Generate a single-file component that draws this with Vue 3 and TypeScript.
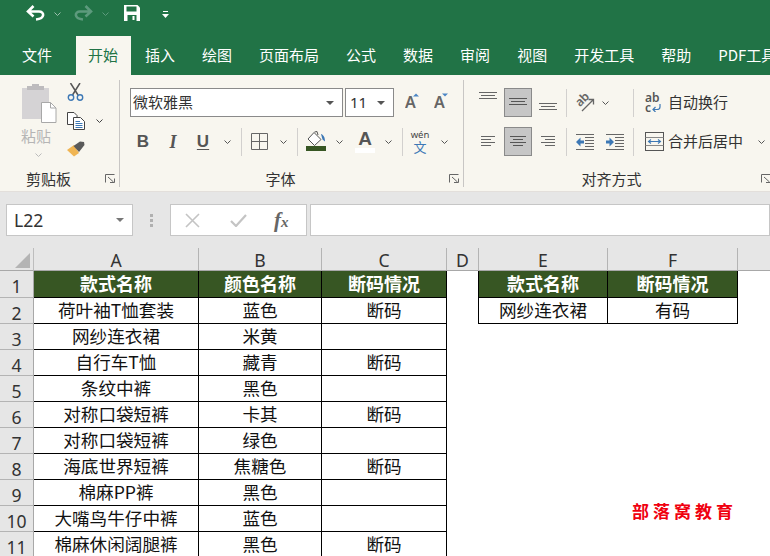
<script setup lang="ts">
const tabs = ['插入', '绘图', '页面布局', '公式', '数据', '审阅', '视图', '开发工具', '帮助', 'PDF工具']
const colHeads = [
  { key: 'A', cls: 'ca' },
  { key: 'B', cls: 'cb' },
  { key: 'C', cls: 'cc' },
  { key: 'D', cls: 'cd' },
  { key: 'E', cls: 'ce' },
  { key: 'F', cls: 'cf' },
]
const rows: [string, string, string][] = [
  ['荷叶袖T恤套装', '蓝色', '断码'],
  ['网纱连衣裙', '米黄', ''],
  ['自行车T恤', '藏青', '断码'],
  ['条纹中裤', '黑色', ''],
  ['对称口袋短裤', '卡其', '断码'],
  ['对称口袋短裤', '绿色', ''],
  ['海底世界短裤', '焦糖色', '断码'],
  ['棉麻PP裤', '黑色', ''],
  ['大嘴鸟牛仔中裤', '蓝色', ''],
  ['棉麻休闲阔腿裤', '黑色', '断码'],
]
const side: Record<number, [string, string]> = { 0: ['网纱连衣裙', '有码'] }
</script>

<template>
  <div class="app">
    <div class="qat">
      <svg class="q-undo" width="20" height="16" viewBox="0 0 20 16"><path d="M7.5 1 L2 6.5 L7.5 11.5 M2 6.5 H13 C18.5 6.5 19.5 13.5 10 14.5" fill="none" stroke="#fff" stroke-width="2.6"/></svg>
      <svg class="q-chev1" width="7" height="4" viewBox="0 0 7 4"><path d="M.5.5 3.5 3.5 6.5.5" fill="none" stroke="#9cc0ad" stroke-width="1"/></svg>
      <svg class="q-redo" width="20" height="16" viewBox="0 0 20 16"><path d="M12.5 1 L18 6.5 L12.5 11.5 M18 6.5 H7 C1.5 6.5 .5 13.5 10 14.5" fill="none" stroke="#5d9a7d" stroke-width="2.6"/></svg>
      <svg class="q-chev2" width="7" height="4" viewBox="0 0 7 4"><path d="M.5.5 3.5 3.5 6.5.5" fill="none" stroke="#5d9a7d" stroke-width="1"/></svg>
      <svg class="q-save" width="16" height="16" viewBox="0 0 16 16"><path d="M0 0H13.5L16 2.5V16H0Z" fill="#fff"/><rect x="2.5" y="1.5" width="10" height="5" fill="#217346"/><rect x="3.5" y="10" width="9" height="6" fill="#217346"/><rect x="8.5" y="11" width="2" height="4" fill="#fff"/></svg>
      <svg class="q-cust" width="7" height="7" viewBox="0 0 7 7"><rect x="1" y="0" width="5" height="1" fill="#fff"/><path d="M0 3H7L3.500 7Z" fill="#fff"/></svg>
    </div>

    <div class="tabs">
      <span class="tab first">文件</span>
      <span class="tab active">开始</span>
      <span v-for="t in tabs" :key="t" class="tab">{{ t }}</span>
    </div>

    <div class="ribbon">
      <section class="group g-clip">
        <div class="clip-body">
          <div class="paste">
            <svg width="36" height="40" viewBox="0 0 36 40">
              <rect x="1" y="5" width="27" height="31" fill="#d5d3d5"/>
              <path d="M6 7V3H11V1H18V3H23V7Z" fill="#bdbbbd"/>
              <path d="M20.500 19.500H29.500L35 25V39.500H20.500Z" fill="#fff" stroke="#a8a8a8"/>
              <path d="M29.500 19.500V25H35" fill="none" stroke="#a8a8a8"/>
            </svg>
            <span class="paste-t">粘贴</span>
            <svg class="p-chev" width="7" height="4" viewBox="0 0 7 4"><path d="M.5.5 3.500 3.500 6.500.5" fill="none" stroke="#bbb"/></svg>
          </div>
          <div class="clip-tools">
            <svg width="17" height="18" viewBox="0 0 17 18">
              <path d="M3.500 0 11 12M13 0 5.500 12" stroke="#555" stroke-width="1.500" fill="none"/>
              <circle cx="4" cy="14.500" r="2.700" fill="none" stroke="#3d78b5" stroke-width="1.400"/>
              <circle cx="13" cy="14.500" r="2.700" fill="none" stroke="#3d78b5" stroke-width="1.400"/>
            </svg>
            <div class="copy-row">
              <svg width="18" height="18" viewBox="0 0 18 18">
                <path d="M.5.5H7L10 3.500V12.500H.5Z" fill="#fff" stroke="#444"/>
                <path d="M6.500 5.500H13.500L17.500 9.500V17.500H6.500Z" fill="#fff" stroke="#444"/>
                <path d="M8.500 9.500H13M8.500 11.500H15.500M8.500 13.500H15.500M8.500 15.500H15.500" stroke="#3d78b5"/>
              </svg>
              <svg class="chev" width="7" height="4" viewBox="0 0 7 4"><path d="M.5.5 3.500 3.500 6.500.5" fill="none" stroke="#444"/></svg>
            </div>
            <svg width="18" height="16" viewBox="0 0 18 16">
              <path d="M0 9 7 4 12 12 7 15.500Z" fill="#f0b553"/>
              <path d="M6.500 5 13 0.500 17 1 17.500 4 12 11Z" fill="#5a5a5a"/>
            </svg>
          </div>
        </div>
        <div class="g-label">
          <span>剪贴板</span>
          <svg class="launch" width="10" height="9" viewBox="0 0 10 9"><path d="M.5 8.500V.5H9.500M3 3 8.500 8M5 8.500H9.500V4.500" fill="none" stroke="#666"/></svg>
        </div>
      </section>

      <section class="group g-font">
        <div class="f-row1">
          <div class="combo name-c"><span>微软雅黑</span><i class="drop"></i></div>
          <div class="combo size-c"><span>11</span><i class="drop"></i></div>
          <svg class="grow" width="20" height="18" viewBox="0 0 20 18"><text x="0" y="15" class="big-a">A</text><path d="M8 3.500 11 .5 14 3.500Z" fill="#4a86c5"/></svg>
          <svg class="shrink" width="20" height="18" viewBox="0 0 20 18"><text x="0" y="15" class="big-a">A</text><path d="M8 .5H14L11 3.500Z" fill="#4a86c5"/></svg>
        </div>
        <div class="f-row2">
          <b class="fb">B</b>
          <em class="fi">I</em>
          <span class="fu">U</span>
          <svg class="chev" width="7" height="4" viewBox="0 0 7 4"><path d="M.5.5 3.500 3.500 6.500.5" fill="none" stroke="#555"/></svg>
          <i class="sep"></i>
          <svg width="17" height="17" viewBox="0 0 17 17"><path d="M.5.5H16.500V16.500H.5ZM8.500.5V16.500M.5 8.500H16.500" fill="none" stroke="#666"/></svg>
          <svg class="chev" width="7" height="4" viewBox="0 0 7 4"><path d="M.5.5 3.500 3.500 6.500.5" fill="none" stroke="#555"/></svg>
          <i class="sep"></i>
          <svg width="20" height="21" viewBox="0 0 20 21">
            <path d="M8 1.500 15 8.500 8.500 14.500 2 8Z" fill="#fff" stroke="#555"/>
            <path d="M15 3C17 3.500 19 6 19 10.500L16.500 8.500Z" fill="#3d78b5"/>
            <path d="M8.500 1 11 .5 12 4" fill="none" stroke="#555"/>
            <rect x="0" y="15" width="20" height="5" fill="#375623"/>
          </svg>
          <svg class="chev" width="7" height="4" viewBox="0 0 7 4"><path d="M.5.5 3.500 3.500 6.500.5" fill="none" stroke="#555"/></svg>
          <div class="font-a"><span>A</span><i></i></div>
          <svg class="chev" width="7" height="4" viewBox="0 0 7 4"><path d="M.5.5 3.500 3.500 6.500.5" fill="none" stroke="#555"/></svg>
          <i class="sep"></i>
          <div class="wen"><span>wén</span><em>文</em></div>
          <svg class="chev" width="7" height="4" viewBox="0 0 7 4"><path d="M.5.5 3.500 3.500 6.500.5" fill="none" stroke="#555"/></svg>
        </div>
        <div class="g-label">
          <span>字体</span>
          <svg class="launch" width="10" height="9" viewBox="0 0 10 9"><path d="M.5 8.500V.5H9.500M3 3 8.500 8M5 8.500H9.500V4.500" fill="none" stroke="#666"/></svg>
        </div>
      </section>

      <section class="group g-align">
        <div class="a-row a-row1">
          <svg class="va-top" width="18" height="9" viewBox="0 0 18 9"><path d="M0 .5H18M2 3.500H16M0 6.500H18" stroke="#666"/></svg>
          <div class="on"><svg width="18" height="9" viewBox="0 0 18 9"><path d="M0 .5H18M2 3.500H16M0 6.500H18" stroke="#555"/></svg></div>
          <svg class="va-bot" width="18" height="9" viewBox="0 0 18 9"><path d="M0 1.500H18M2 4.500H16M0 7.500H18" stroke="#666"/></svg>
          <i class="sep"></i>
          <svg width="20" height="20" viewBox="0 0 20 20">
            <text x="1" y="11" transform="rotate(-45 7 8)" class="orient">ab</text>
            <path d="M7 18 18 7M13.500 6.500H18.500V11.500" fill="none" stroke="#666" stroke-width="1.300"/>
          </svg>
          <svg class="chev" width="7" height="4" viewBox="0 0 7 4"><path d="M.5.5 3.500 3.500 6.500.5" fill="none" stroke="#555"/></svg>
          <i class="sep sep-end"></i>
          <div class="wrap-ic"><span>ab</span><span>c<svg width="9" height="8" viewBox="0 0 9 8"><path d="M8 0V3C8 5 6.500 5.500 5 5.500H1M3.500 3 1 5.500 3.500 8" fill="none" stroke="#3d78b5" stroke-width="1.200"/></svg></span></div>
          <span class="a-text">自动换行</span>
        </div>
        <div class="a-row a-row2">
          <svg width="14" height="11" viewBox="0 0 14 11"><path d="M0 .5H14M0 3.500H10M0 6.500H14M0 9.500H10" stroke="#666"/></svg>
          <div class="on"><svg width="16" height="11" viewBox="0 0 16 11"><path d="M0 .5H16M3 3.500H13M0 6.500H16M3 9.500H13" stroke="#555"/></svg></div>
          <svg width="14" height="11" viewBox="0 0 14 11"><path d="M0 .5H14M4 3.500H14M0 6.500H14M4 9.500H14" stroke="#666"/></svg>
          <i class="sep"></i>
          <svg width="18" height="16" viewBox="0 0 18 16">
            <path d="M0 .5H18M9 3.500H18M9 6.500H18M9 9.500H18M9 12.500H18M0 15.500H18" stroke="#666"/>
            <path d="M0 8 4.500 3.500V6.500H8V9.500H4.500V12.500Z" fill="#3d78b5"/>
          </svg>
          <svg width="18" height="16" viewBox="0 0 18 16">
            <path d="M0 .5H18M9 3.500H18M9 6.500H18M9 9.500H18M9 12.500H18M0 15.500H18" stroke="#666"/>
            <path d="M8 8 3.500 3.500V6.500H0V9.500H3.500V12.500Z" fill="#3d78b5"/>
          </svg>
          <i class="sep sep-end"></i>
          <svg width="19" height="19" viewBox="0 0 19 19">
            <rect x=".5" y=".5" width="18" height="18" fill="#f8f6ef" stroke="#555"/>
            <path d="M.5 5.500H18.500M.5 13.500H18.500" stroke="#888"/>
            <path d="M3 9.500H16M6 7.500 3.500 9.500 6 11.500M13 7.500 15.500 9.500 13 11.500" fill="none" stroke="#3d78b5" stroke-width="1.100"/>
          </svg>
          <span class="a-text">合并后居中</span>
          <svg class="chev" width="7" height="4" viewBox="0 0 7 4"><path d="M.5.5 3.500 3.500 6.500.5" fill="none" stroke="#555"/></svg>
        </div>
        <div class="g-label">
          <span>对齐方式</span>
          <svg class="launch" width="10" height="9" viewBox="0 0 10 9"><path d="M.5 8.500V.5H9.500M3 3 8.500 8M5 8.500H9.500V4.500" fill="none" stroke="#666"/></svg>
        </div>
      </section>
    </div>

    <div class="fbar">
      <div class="namebox"><span>L22</span><i class="drop"></i></div>
      <div class="grip"><i></i><i></i><i></i></div>
      <div class="fx-box">
        <svg width="15" height="15" viewBox="0 0 15 15"><path d="M1 1 14 14M14 1 1 14" stroke="#c4c4c4" stroke-width="1.600" fill="none"/></svg>
        <svg width="17" height="13" viewBox="0 0 17 13"><path d="M1 7 6 12 16 1" stroke="#c4c4c4" stroke-width="2.200" fill="none"/></svg>
        <span class="fx">f<span class="x">x</span></span>
      </div>
      <div class="input"></div>
    </div>

    <div class="sheet">
      <div class="corner"><i></i></div>
      <div v-for="c in colHeads" :key="c.key" class="colhead">{{ c.key }}</div>
      <div class="colhead rest"></div>

      <div class="rowhead r1">1</div>
      <div class="cell head">款式名称</div>
      <div class="cell head">颜色名称</div>
      <div class="cell head">断码情况</div>
      <div class="gap edge"></div>
      <div class="cell head">款式名称</div>
      <div class="cell head">断码情况</div>
      <div></div>

      <template v-for="(r, i) in rows" :key="i">
        <div class="rowhead">{{ i + 2 }}</div>
        <div class="cell">{{ r[0] }}</div>
        <div class="cell">{{ r[1] }}</div>
        <div class="cell">{{ r[2] }}</div>
        <div class="gap" :class="{ edge: side[i] }"></div>
        <template v-if="side[i]">
          <div class="cell">{{ side[i][0] }}</div>
          <div class="cell">{{ side[i][1] }}</div>
        </template>
        <template v-else>
          <div></div>
          <div></div>
        </template>
        <div></div>
      </template>
    </div>

    <div class="stamp">部落窝教育</div>
  </div>
</template>

<style scoped>
.app {
  position: relative;
  width: 770px;
  height: 556px;
  overflow: hidden;
  background: #fff;
  font-family: "Noto Sans CJK SC", "Noto Sans", sans-serif;
  color: #333;
}
svg { display: block; flex: none; }
i, em { font-style: normal; }

.qat {
  height: 36px;
  background: #217346;
  display: flex;
  align-items: flex-start;
}
.q-undo { margin: 5px 0 0 26px; }
.q-chev1 { margin: 12px 0 0 8px; }
.q-redo { margin: 5px 0 0 12px; }
.q-chev2 { margin: 12px 0 0 9px; }
.q-save { margin: 5px 0 0 15px; }
.q-cust { margin: 11px 0 0 22px; }

.tabs {
  height: 39px;
  background: #217346;
  display: flex;
  gap: 2px;
  padding-left: 10px;
  white-space: nowrap;
  overflow: hidden;
}
.tab {
  flex: none;
  padding: 0 13px 0 12px;
  font-size: 15px;
  line-height: 37px;
  color: #fff;
}
.tab.first { margin-right: 9px; }
.tab.active {
  background: #f8f6ef;
  color: #217346;
}

.ribbon {
  height: 116px;
  background: #f8f6ef;
  display: flex;
  border-bottom: 1px solid #e3dfdb;
  box-sizing: content-box;
}
.group {
  position: relative;
  flex: none;
  height: 107px;
  margin-top: 5px;
  border-right: 1px solid #c8c6c4;
  box-sizing: border-box;
}
.g-clip { width: 120px; }
.g-font { width: 344px; padding: 8px 0 0 10px; }
.g-align { width: 306px; padding-top: 8px; border-right: 0; }
.g-label {
  position: absolute;
  left: 0;
  right: 0;
  bottom: -2px;
  text-align: center;
  font-size: 15px;
  line-height: 20px;
  color: #333;
}
.g-clip .g-label { padding-right: 22px; box-sizing: border-box; }
.g-font .g-label { padding-right: 22px; box-sizing: border-box; }
.g-align .g-label { padding-right: 11px; box-sizing: border-box; }
.launch { position: absolute; right: 4px; bottom: 6px; }
.g-align .launch { right: -1px; }

.clip-body { display: flex; }
.paste {
  width: 54px;
  margin-left: 12px;
  padding-top: 3px;
  box-sizing: border-box;
  padding-left: 9px;
  display: flex;
  flex-direction: column;
  align-items: flex-start;
}
.paste-t {
  margin-top: 2px;
  font-size: 15px;
  line-height: 22px;
  color: #b5b5b5;
}
.p-chev { margin: 6px 0 0 14px; }
.clip-tools {
  padding: 3px 0 0 1px;
  display: flex;
  flex-direction: column;
  gap: 11px;
}
.copy-row { display: flex; align-items: center; gap: 11px; }

.f-row1 { display: flex; align-items: flex-start; }
.combo {
  height: 29px;
  box-sizing: border-box;
  background: #fff;
  border: 1px solid #8a8a8a;
  display: flex;
  align-items: center;
  justify-content: space-between;
  padding: 0 8px 2px 2px;
  font-size: 15px;
}
.combo .drop { margin-top: 2px; }
.name-c { width: 213px; }
.size-c { width: 49px; margin-left: 2px; padding-left: 4px; font-family: "Noto Sans", sans-serif; }
.drop {
  width: 0;
  height: 0;
  border-left: 4px solid transparent;
  border-right: 4px solid transparent;
  border-top: 4px solid #555;
}
.grow { margin: 5px 0 0 11px; }
.shrink { margin: 5px 0 0 9px; }
.big-a {
  font-family: "Noto Sans", sans-serif;
  font-size: 16px;
  font-weight: 600;
  fill: #666;
}
.f-row2 {
  display: grid;
  grid-template-columns: 30px 30px 30px 18px 10px 26px 22px 6px 32px 14px 38px 8px 20px 16px 32px;
  height: 31px;
  align-items: center;
  justify-items: center;
  margin: 9px 0 0 -2px;
}
.fb, .fi, .fu {
  font-family: "Liberation Sans", sans-serif;
  font-size: 17px;
  line-height: 1;
  color: #555;
  font-weight: 700;
}
.fi { font-family: "Liberation Serif", serif; font-style: italic; font-size: 18px; }
.fu { text-decoration: underline; text-underline-offset: 2px; }
.chev { flex: none; }
.sep {
  width: 1px;
  height: 28px;
  background: #d2d0ce;
}
.font-a {
  width: 20px;
  display: flex;
  flex-direction: column;
  align-items: center;
}
.font-a span {
  font-family: "Liberation Sans", sans-serif;
  font-weight: 700;
  font-size: 19px;
  line-height: 18px;
  color: #555;
}
.font-a i {
  width: 20px;
  height: 5px;
  background: #fff;
}
.wen {
  display: flex;
  flex-direction: column;
  align-items: center;
  white-space: nowrap;
}
.wen span {
  font-family: "Noto Sans", sans-serif;
  font-size: 9.500px;
  line-height: 10px;
  color: #444;
}
.wen em {
  font-size: 13px;
  line-height: 14px;
  color: #3d78b5;
}

.a-row {
  display: grid;
  align-items: center;
  justify-items: center;
  height: 29px;
  margin-left: 9px;
}
.a-row1 { grid-template-columns: 30px 30px 30px 6px 32px 8px 31px 28px auto; }
.a-row2 { grid-template-columns: 30px 30px 30px 6px 32px 28px 11px 28px 84px 18px; margin-top: 10px; }
.va-top { align-self: start; margin-top: 4px; }
.va-bot { align-self: end; margin-bottom: 6px; }
.on {
  width: 28px;
  height: 29px;
  box-sizing: border-box;
  background: #c6c6c6;
  border: 1px solid #8a8a8a;
  display: flex;
  align-items: center;
  justify-content: center;
}
.sep-end { justify-self: end; margin-right: 6px; }
.orient {
  font-family: "Noto Sans", sans-serif;
  font-size: 12px;
  font-weight: 600;
  fill: #666;
}
.wrap-ic {
  display: flex;
  flex-direction: column;
  width: 18px;
  font-family: "Noto Sans", sans-serif;
  font-size: 12px;
  font-weight: 600;
  line-height: 10px;
  color: #555;
}
.wrap-ic span { display: flex; align-items: center; gap: 1px; }
.a-text {
  justify-self: start;
  font-size: 15px;
  line-height: 20px;
  padding-bottom: 2px;
  white-space: nowrap;
  color: #333;
}

.fbar {
  height: 56px;
  background: #e6e6e6;
  display: flex;
  align-items: flex-start;
  padding-top: 12px;
  box-sizing: border-box;
}
.namebox {
  width: 127px;
  height: 32px;
  margin-left: 6px;
  box-sizing: border-box;
  background: #fff;
  border: 1px solid #c6c6c6;
  display: flex;
  align-items: center;
  justify-content: space-between;
  padding: 0 8px 0 7px;
  font-family: "Noto Sans", sans-serif;
  font-size: 17.600px;
  color: #333;
}
.namebox .drop { border-top-color: #777; }
.grip {
  width: 37px;
  height: 32px;
  display: flex;
  flex-direction: column;
  align-items: center;
  justify-content: center;
  gap: 2px;
}
.grip i { width: 3px; height: 3px; background: #b0b0b0; }
.fx-box {
  width: 137px;
  height: 32px;
  box-sizing: border-box;
  background: #fff;
  border: 1px solid #c6c6c6;
  display: flex;
  align-items: center;
  padding-left: 14px;
  gap: 30px;
}
.fx {
  margin-left: -3px;
  font-family: "Liberation Serif", serif;
  font-style: italic;
  font-weight: 700;
  font-size: 21px;
  color: #666;
  line-height: 1;
}
.fx .x { font-size: 15px; }
.input {
  flex: 1;
  height: 32px;
  margin-left: 3px;
  box-sizing: border-box;
  background: #fff;
  border: 1px solid #c6c6c6;
}

.sheet {
  display: grid;
  grid-template-columns: 34px 165px 123px 125px 32px 129px 130px 1fr;
  grid-auto-rows: 26px;
  grid-template-rows: 23px 27px;
  background: #fff;
}
.corner {
  background: #e6e6e6;
  border-bottom: 1px solid #a8a8a8;
  border-right: 1px solid #bdbdbd;
  box-sizing: border-box;
  position: relative;
}
.corner i {
  position: absolute;
  right: 3px;
  bottom: 2px;
  width: 0;
  height: 0;
  border-left: 15px solid transparent;
  border-bottom: 15px solid #b4b4b4;
}
.colhead {
  background: #e6e6e6;
  border-right: 1px solid #b4b4b4;
  border-bottom: 1px solid #a8a8a8;
  box-sizing: border-box;
  text-align: center;
  font-family: "Noto Sans", sans-serif;
  font-size: 17.600px;
  line-height: 25px;
  color: #333;
}
.colhead.rest { border-right: 0; }
.rowhead {
  background: #e6e6e6;
  border-right: 1px solid #a8a8a8;
  border-bottom: 1px solid #b4b4b4;
  box-sizing: border-box;
  text-align: center;
  font-family: "Noto Sans", sans-serif;
  font-size: 17.600px;
  line-height: 31px;
  color: #333;
  overflow: hidden;
}
.cell {
  box-sizing: border-box;
  border-right: 1px solid #000;
  border-bottom: 1px solid #000;
  display: flex;
  align-items: center;
  justify-content: center;
  padding: 0 0 2px 0;
  font-size: 17.600px;
  line-height: 1;
  color: #111;
  white-space: nowrap;
}
.cell.head {
  background: #375623;
  color: #fff;
  font-weight: 700;
  font-size: 18px;
}
.gap { box-sizing: border-box; }
.gap.edge { border-right: 1px solid #000; }

.stamp {
  position: absolute;
  left: 632px;
  top: 501px;
  font-size: 17px;
  line-height: 20px;
  letter-spacing: 4px;
  font-weight: 700;
  color: #f0000f;
  white-space: nowrap;
}
</style>
